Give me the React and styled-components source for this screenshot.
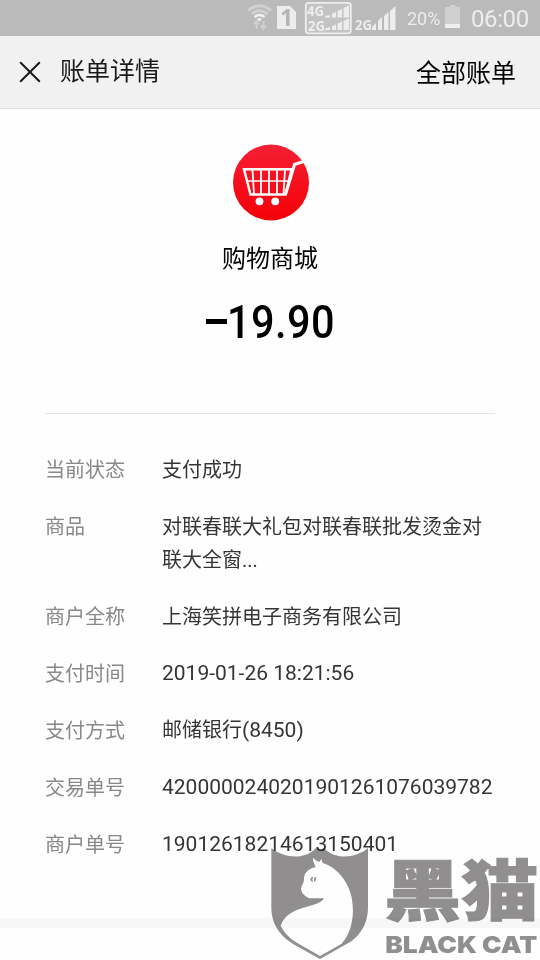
import styled, { createGlobalStyle } from 'styled-components';

const GlobalStyle = createGlobalStyle`
  * {
    box-sizing: border-box;
  }
  body {
    margin: 0;
    background: #fefefe;
    font-family: Roboto, 'Noto Sans CJK SC', sans-serif;
  }
`;

const Page = styled.div`
  position: relative;
  display: flex;
  flex-direction: column;
  width: 540px;
  height: 960px;
  overflow: hidden;
  background: #fefefe;
`;

const StatusBar = styled.div`
  display: flex;
  align-items: center;
  flex: none;
  height: 36px;
  padding-left: 246px;
  background: #bababa;
  color: #ededed;
  svg {
    display: block;
    flex: none;
  }
`;

const BatteryLevel = styled.span`
  width: 38px;
  font-size: 18px;
  line-height: 36px;
  padding-top: 2px;
  white-space: nowrap;
`;

const Clock = styled.span`
  margin-left: 10px;
  font-size: 24px;
  letter-spacing: -0.4px;
  line-height: 36px;
  padding-top: 1px;
`;

const Header = styled.header`
  display: flex;
  align-items: center;
  flex: none;
  height: 73px;
  padding: 0 24px 0 19px;
  border-bottom: 1px solid #dedede;
  background: #f1f1f1;
  svg {
    display: block;
  }
`;

const Title = styled.h1`
  flex: 1;
  margin: 0 0 0 19px;
  color: #1a1a1a;
  font-size: 25px;
  line-height: 36px;
  font-weight: 400;
`;

const AllBills = styled.span`
  margin-top: 4px;
  color: #000;
  font-size: 25px;
  line-height: 36px;
`;

const Summary = styled.section`
  display: flex;
  flex-direction: column;
  align-items: center;
  flex: none;
  height: 305px;
  margin: 0 45px;
  padding-top: 35px;
  border-bottom: 1px solid #e5e5e5;
`;

const ShopName = styled.div`
  margin-top: 19px;
  color: #000;
  font-size: 24px;
  line-height: 36px;
`;

const Amount = styled.div`
  display: flex;
  align-items: center;
  width: 129px;
  margin-top: 18px;
  color: #000;
  font-size: 46px;
  line-height: 54px;
  font-weight: 500;
`;

const Minus = styled.span`
  flex: none;
  width: 21px;
  height: 5px;
  margin-bottom: 1px;
  background: #000;
`;

const AmountDigits = styled.span`
  flex: none;
  letter-spacing: 0.5px;
  transform: scaleX(0.9);
  transform-origin: left center;
`;

const Details = styled.dl`
  display: flex;
  flex-direction: column;
  gap: 24px;
  flex: none;
  height: 504px;
  margin: 0;
  padding: 40px 45px 0;
`;

const DetailRow = styled.div`
  display: flex;
  height: ${({ $lines }) => $lines * 33}px;
  font-size: 20px;
  line-height: 33px;
`;

const Label = styled.dt`
  flex: none;
  width: 117px;
  color: #888;
`;

const Value = styled.dd`
  margin: ${({ $numeric }) => ($numeric ? '-1px' : '0')} 0 0;
  color: #353535;
  white-space: nowrap;
`;

const Digits = styled.span`
  font-size: 21px;
`;

const ValueLine = styled.div`
  height: 33px;
`;

const SectionGap = styled.div`
  flex: none;
  height: 10px;
  background: #f7f7f7;
`;

const Watermark = styled.div`
  position: absolute;
  left: 260px;
  top: 840px;
  mix-blend-mode: multiply;
  svg {
    display: block;
  }
`;

const details = [
  { label: '当前状态', lines: ['支付成功'] },
  { label: '商品', lines: ['对联春联大礼包对联春联批发烫金对', '联大全窗...'] },
  { label: '商户全称', lines: ['上海笑拼电子商务有限公司'] },
  { label: '支付时间', digits: '2019-01-26 18:21:56' },
  { label: '支付方式', lines: ['邮储银行'], digits: '(8450)' },
  { label: '交易单号', digits: '4200000240201901261076039782' },
  { label: '商户单号', digits: '19012618214613150401' },
];

const WifiIcon = () => (
  <svg width='30' height='36' viewBox='0 0 30 36' fill='none' strokeLinecap='butt'>
    <path d='M2 10.500Q13.500 1 25 10.500' stroke='#d0d0d0' strokeWidth='3' />
    <path d='M5.500 14Q13.500 7.500 21.500 14' stroke='#d0d0d0' strokeWidth='3' />
    <path d='M8.500 17Q13.500 13 18.500 17' stroke='#f2f2f2' strokeWidth='2.500' />
    <path d='M11 19Q13.500 17 16 19L13.500 21.500Z' fill='#f2f2f2' />
    <path d='M10.500 29V22M7.800 24.500L10.500 21L13.200 24.500M17.500 21V28M14.800 25.500L17.500 29L20.200 25.500' stroke='#d0d0d0' strokeWidth='1.800' />
  </svg>
);

const SimIcon = () => (
  <svg width='24' height='36' viewBox='0 0 24 36'>
    <path d='M1 6H14L20 12V29H1Z' fill='#ededed' />
    <text x='10.500' y='26' textAnchor='middle' fill='#b5b5b5' fontSize='23' fontWeight='700' fontFamily='Noto Sans'>1</text>
  </svg>
);

const DualSignalIcon = () => (
  <svg width='54' height='36' viewBox='0 0 54 36' fill='#ededed'>
    <rect x='5.800' y='2.800' width='45' height='30.500' rx='2.500' fill='#c3c3c3' stroke='#eee' strokeWidth='1.800' />
    <text x='7' y='15.500' fontSize='14' fontWeight='700' fontFamily='Noto Sans' textLength='17' lengthAdjust='spacingAndGlyphs'>4G</text>
    <text x='8' y='30.500' fontSize='14' fontWeight='700' fontFamily='Noto Sans' textLength='17' lengthAdjust='spacingAndGlyphs'>2G</text>
    <path d='M25 17.500V16L30 15V17.500ZM32 17.500V13.500L36 12V17.500ZM37.500 17.500V11L42 9V17.500ZM43.500 17.500V8L49 5.500V17.500Z' />
    <path d='M25 30V28.500L30 27V30ZM32 30V26L36 24.500V30ZM37.500 30V23.500L42 21.500V30ZM43.500 30V21L49 18.500V30Z' />
  </svg>
);

const SignalIcon = () => (
  <svg width='53' height='36' viewBox='0 0 53 36' fill='#ededed'>
    <text x='1' y='30' fontSize='14' fontWeight='700' fontFamily='Noto Sans' textLength='17' lengthAdjust='spacingAndGlyphs'>2G</text>
    <path d='M18 30V27L22 23V30ZM24 30V21L28 17V30ZM30 30V16L34.500 12V30ZM36 30V11L41.500 6V30Z' />
  </svg>
);

const BatteryIcon = () => (
  <svg width='16' height='36' viewBox='0 0 16 36'>
    <path d='M0 7H5V5H10.500V7H15V28H0Z' fill='#d0d0d0' />
    <path d='M0 24H15V28H0Z' fill='#efefef' />
  </svg>
);

const CloseIcon = () => (
  <svg width='22' height='22' viewBox='0 0 22 22' fill='none'>
    <path d='M1.200 1.200L20.800 20.800M20.800 1.200L1.200 20.800' stroke='#1a1a1a' strokeWidth='2' />
  </svg>
);

const CartLogo = () => (
  <svg width='78' height='78' viewBox='-1 0 78 78' fill='none'>
    <defs>
      <linearGradient id='cartRed' x1='0' y1='0' x2='0' y2='1'>
        <stop offset='0' stopColor='#f61f34' />
        <stop offset='1' stopColor='#f40008' />
      </linearGradient>
    </defs>
    <circle cx='39' cy='38.500' r='38' fill='url(#cartRed)' />
    <path d='M12 25.200H59.500L53.500 50.500H18.500Z' stroke='#fff' strokeWidth='2.400' />
    <path d='M53.500 50.500L62.500 20.500L73 17' stroke='#fff' strokeWidth='3' />
    <path d='M15 37H57' stroke='#fff' strokeWidth='1.500' />
    <path d='M20.500 26L22 50M29 26V50M37 26V50M45 26V50M53 26L51.500 50' stroke='#fff' strokeWidth='1.800' />
    <circle cx='27.500' cy='57.300' r='3.900' fill='#fff' />
    <circle cx='43.200' cy='57.300' r='3.900' fill='#fff' />
  </svg>
);

const BlackCatMark = () => (
  <svg width='280' height='120' viewBox='0 0 840 360' fill='#918f90'>
    <path
      fillRule='evenodd'
      d='M34 24C73 56 136 60 168 24L180 30L192 24C224 60 286 56 324 24V202C324 260 291 298 258 313L180 357L103 314C68 294 34 260 34 202Z
      M159 53C158 63 164 73 167 81C147 86 132 96 132 118C132 130 124 138 123 146C124 162 138 169 148 175H192C180 204 82 194 62 258C76 284 96 301 116 311L180 348L244 312C270 284 282 239 278 197C276 135 234 82 188 69L184 57L178 66L169 62Z'
    />
    <path d='M151 118C152 112 156 110 160 110L157 118L159 125C154 125 151 122 151 118Z' />
    <path d='M164 111L169 112L167 122L161 126Z' />
    <text x='372' y='224' fontSize='198' fontWeight='900' fontFamily="'Noto Sans CJK SC', sans-serif" stroke='#918f90' strokeWidth='3' textLength='464' lengthAdjust='spacingAndGlyphs'>黑猫</text>
    <text x='376' y='338' fontSize='69' fontWeight='900' fontFamily='Inter, sans-serif' textLength='456' lengthAdjust='spacingAndGlyphs'>BLACK CAT</text>
  </svg>
);

const App = () => (
  <>
    <GlobalStyle />
    <Page>
      <StatusBar>
        <WifiIcon />
        <SimIcon />
        <DualSignalIcon />
        <SignalIcon />
        <BatteryLevel>20%</BatteryLevel>
        <BatteryIcon />
        <Clock>06:00</Clock>
      </StatusBar>
      <Header>
        <CloseIcon />
        <Title>账单详情</Title>
        <AllBills>全部账单</AllBills>
      </Header>
      <Summary>
        <CartLogo />
        <ShopName>购物商城</ShopName>
        <Amount>
          <Minus />
          <AmountDigits>19.90</AmountDigits>
        </Amount>
      </Summary>
      <Details>
        {details.map(({ label, lines, digits }) => (
          <DetailRow key={label} $lines={lines ? lines.length : 1}>
            <Label>{label}</Label>
            <Value $numeric={Boolean(digits)}>
              {lines && lines.length > 1
                ? lines.map((line) => <ValueLine key={line}>{line}</ValueLine>)
                : lines}
              {digits && <Digits>{digits}</Digits>}
            </Value>
          </DetailRow>
        ))}
      </Details>
      <SectionGap />
      <Watermark>
        <BlackCatMark />
      </Watermark>
    </Page>
  </>
);

export default App;
